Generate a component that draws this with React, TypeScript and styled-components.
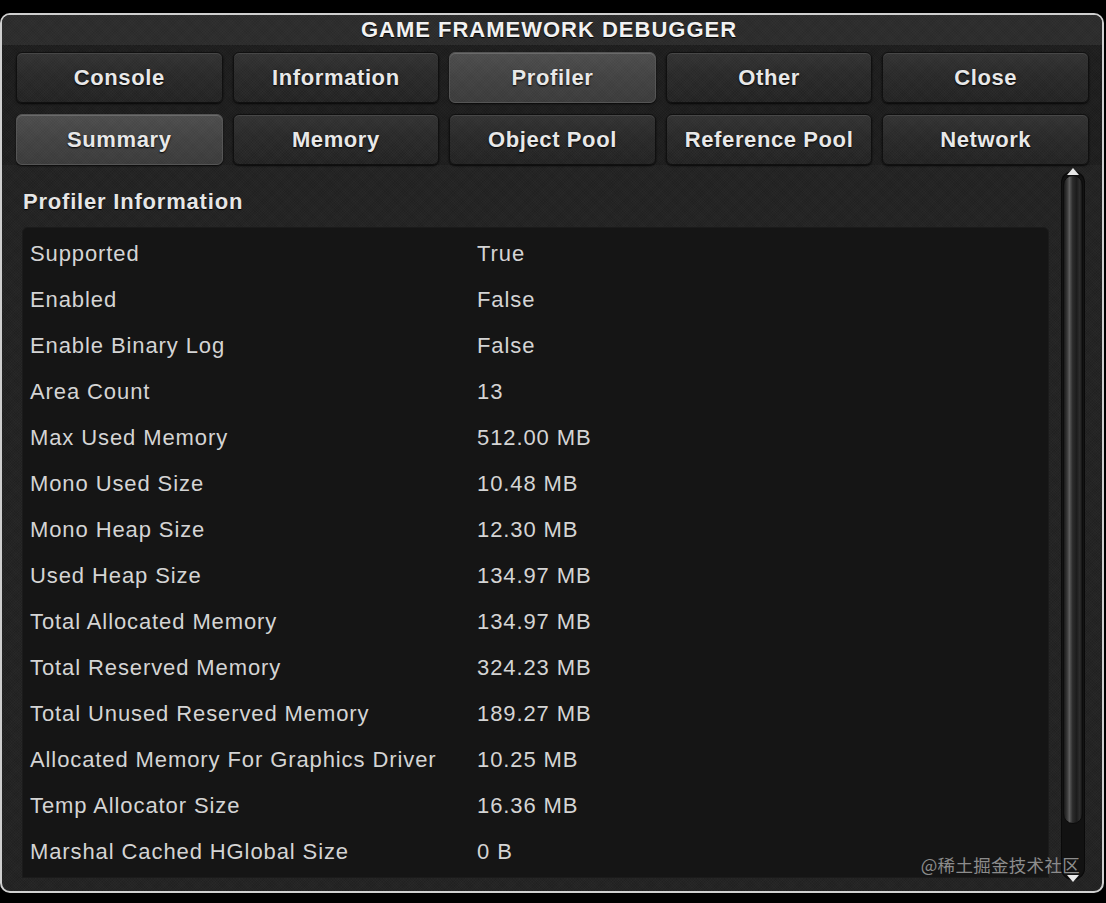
import styled, { createGlobalStyle } from "styled-components";

const GlobalStyle = createGlobalStyle`
  html, body {
    margin: 0;
    padding: 0;
    background: #000;
  }
  * {
    box-sizing: border-box;
  }
`;

const noise = `repeating-linear-gradient(45deg, rgba(255,255,255,0.012) 0 1px, rgba(0,0,0,0.02) 1px 2px),
  repeating-linear-gradient(-45deg, rgba(255,255,255,0.01) 0 1px, rgba(0,0,0,0.018) 1px 2px)`;

const Page = styled.div`
  width: 1106px;
  height: 903px;
  padding-top: 13px;
  background: #000;
  font-family: "Liberation Sans", Arial, sans-serif;
`;

const Window = styled.div`
  position: relative;
  width: 1104px;
  height: 880px;
  border: 2px solid #cfcfcf;
  border-radius: 10px;
  background: ${noise}, #222;
  display: flex;
  flex-direction: column;
  overflow: hidden;
`;

const TitleBar = styled.div`
  height: 30px;
  line-height: 30px;
  text-align: center;
  padding-right: 6px;
  font-weight: bold;
  font-size: 22px;
  letter-spacing: 1px;
  color: #f2f2f2;
  background: ${noise}, #2c2c2c;
  text-shadow: 0 1px 1px #000;
`;

const TabGrid = styled.div`
  display: grid;
  grid-template-columns: repeat(5, 1fr);
  grid-auto-rows: 51px;
  gap: 11px 10px;
  padding: 7px 13px 0 14px;
  background: ${noise}, #1d1d1d;
`;

const TabButton = styled.div<{ $active?: boolean }>`
  display: flex;
  align-items: center;
  justify-content: center;
  border-radius: 6px;
  font-weight: bold;
  font-size: 22px;
  letter-spacing: 0.6px;
  color: #e8e8e8;
  text-shadow: 0 1px 2px #000;
  border: 1px solid ${(p) => (p.$active ? "#555" : "#101010")};
  background: ${(p) =>
    p.$active
      ? `${noise}, linear-gradient(#4e4e4e, #444 45%, #3c3c3c)`
      : `${noise}, linear-gradient(#343434, #2a2a2a 45%, #232323)`};
  box-shadow: inset 0 1px 0 ${(p) => (p.$active ? "#6a6a6a" : "#474747")},
    0 1px 2px rgba(0, 0, 0, 0.8);
`;

const Body = styled.div`
  flex: 1;
  display: flex;
  gap: 12px;
  padding: 0 17px 12px 20px;
  min-height: 0;
`;

const Main = styled.div`
  flex: 1;
  display: flex;
  flex-direction: column;
  min-height: 0;
`;

const SectionTitle = styled.div`
  margin: 24px 0 12px 1px;
  height: 26px;
  line-height: 26px;
  font-weight: bold;
  font-size: 22px;
  letter-spacing: 0.8px;
  color: #e6e6e6;
  text-shadow: 0 1px 1px #000;
`;

const InfoTable = styled.div`
  flex: 1;
  padding: 3px 8px 0 7px;
  background: #151515;
  border: 1px solid #1b1b1b;
  border-radius: 6px 6px 0 0;
  margin-bottom: 1px;
`;

const InfoRow = styled.div`
  display: grid;
  grid-template-columns: 447px 1fr;
  height: 46px;
  align-items: center;
  font-size: 22px;
  letter-spacing: 0.9px;
  color: #d4d4d4;
`;

const ScrollTrack = styled.div`
  position: relative;
  width: 24px;
  margin-top: 6px;
  margin-bottom: -1px;
  border-radius: 12px;
  background: #121212;
  box-shadow: inset 0 0 0 1px #0a0a0a;
  padding: 4px 2px 56px;
  display: flex;
`;

const ScrollThumb = styled.div`
  flex: 1;
  border-radius: 10px;
  border: 1px solid #0c0c0c;
  background: linear-gradient(
    90deg,
    #1a1a1a 0%,
    #3a3a3a 18%,
    #5e5e5e 30%,
    #2c2c2c 48%,
    #1c1c1c 70%,
    #2e2e2e 88%,
    #141414 100%
  );
`;

const Arrow = styled.div<{ $down?: boolean }>`
  position: absolute;
  left: 50%;
  transform: translateX(-50%);
  width: 0;
  height: 0;
  border-left: 6px solid transparent;
  border-right: 6px solid transparent;
  ${(p) =>
    p.$down
      ? "bottom: -2px; border-top: 7px solid #e8e8e8;"
      : "top: -3px; border-bottom: 7px solid #e8e8e8;"}
`;

const Watermark = styled.div`
  position: absolute;
  right: 22px;
  bottom: 14px;
  font-family: "Noto Sans CJK SC", "Liberation Sans", sans-serif;
  font-size: 17.5px;
  color: #8c8c8c;
  letter-spacing: 0.3px;
`;

const topTabs = ["Console", "Information", "Profiler", "Other", "Close"];
const subTabs = ["Summary", "Memory", "Object Pool", "Reference Pool", "Network"];

const rows: [string, string][] = [
  ["Supported", "True"],
  ["Enabled", "False"],
  ["Enable Binary Log", "False"],
  ["Area Count", "13"],
  ["Max Used Memory", "512.00 MB"],
  ["Mono Used Size", "10.48 MB"],
  ["Mono Heap Size", "12.30 MB"],
  ["Used Heap Size", "134.97 MB"],
  ["Total Allocated Memory", "134.97 MB"],
  ["Total Reserved Memory", "324.23 MB"],
  ["Total Unused Reserved Memory", "189.27 MB"],
  ["Allocated Memory For Graphics Driver", "10.25 MB"],
  ["Temp Allocator Size", "16.36 MB"],
  ["Marshal Cached HGlobal Size", "0 B"],
];

export default function App() {
  return (
    <Page>
      <GlobalStyle />
      <Window>
        <TitleBar>GAME FRAMEWORK DEBUGGER</TitleBar>
        <TabGrid>
          {topTabs.map((t) => (
            <TabButton key={t} $active={t === "Profiler"}>
              {t}
            </TabButton>
          ))}
          {subTabs.map((t) => (
            <TabButton key={t} $active={t === "Summary"}>
              {t}
            </TabButton>
          ))}
        </TabGrid>
        <Body>
          <Main>
            <SectionTitle>Profiler Information</SectionTitle>
            <InfoTable>
              {rows.map(([k, v]) => (
                <InfoRow key={k}>
                  <span>{k}</span>
                  <span>{v}</span>
                </InfoRow>
              ))}
            </InfoTable>
          </Main>
          <ScrollTrack>
            <Arrow />
            <ScrollThumb />
            <Arrow $down />
          </ScrollTrack>
        </Body>
        <Watermark>@稀土掘金技术社区</Watermark>
      </Window>
    </Page>
  );
}
